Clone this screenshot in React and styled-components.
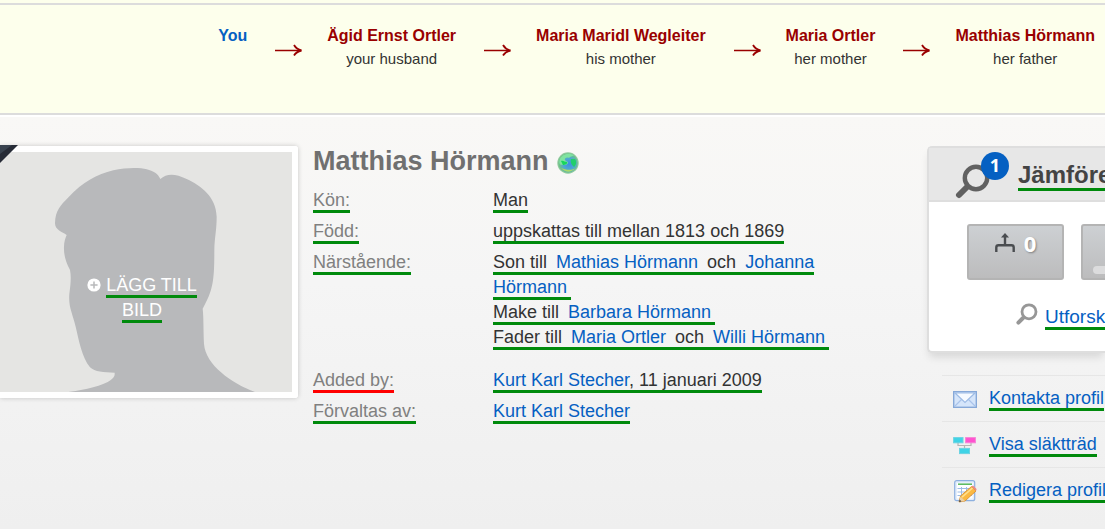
import React from "react";
import styled, { createGlobalStyle } from "styled-components";

const path = [
  { name: "You", me: true },
  { name: "Ägid Ernst Ortler", relation: "your husband" },
  { name: "Maria Maridl Wegleiter", relation: "his mother" },
  { name: "Maria Ortler", relation: "her mother" },
  { name: "Matthias Hörmann", relation: "her father" },
];

function Arrow() {
  return (
    <ArrowIcon viewBox="0 0 27 12" aria-hidden="true">
      <path d="M0 6.5H25" stroke="#990000" strokeWidth="1.5" fill="none" />
      <path
        d="M19 1C20.5 3.6 22.6 5.6 26.5 6.5C22.6 7.4 20.5 9 19 11.5"
        stroke="#990000"
        strokeWidth="1.8"
        fill="none"
      />
    </ArrowIcon>
  );
}

function RelationPath() {
  return (
    <PathBar>
      {path.map((person, i) => (
        <React.Fragment key={person.name}>
          {i > 0 && <Arrow />}
          <Person>
            <PersonLink href="#" $me={person.me}>
              {person.name}
            </PersonLink>
            {person.relation && <Relation>{person.relation}</Relation>}
          </Person>
        </React.Fragment>
      ))}
    </PathBar>
  );
}

function Photo() {
  return (
    <PhotoFrame>
      <Silhouette viewBox="0 66 876 720" aria-hidden="true">
        <path
          fill="#b8b9bb"
          d="M205 786C262 778 345 760 344 732L344 728C310 727 285 726 270 712C245 680 237 632 227 590C217 548 205 532 208 492C212 462 214 440 210 420C196 394 191 372 192 350C192 335 196 325 200 315C187 306 165 300 165 280C166 240 182 226 204 203C250 155 290 133 340 121C378 112 420 112 440 118C460 123 475 132 481 147C500 130 525 130 560 147C604 168 648 200 650 260C650 300 644 320 643 360C643 450 640 480 608 536C611 560 610 600 612 642C617 705 695 760 765 786Z"
        />
      </Silhouette>
      <Corner viewBox="0 0 18 18" aria-hidden="true">
        <path d="M0 0H18L0 18Z" fill="#262b36" />
        <path d="M0 0H12L0 9Z" fill="#39434f" />
      </Corner>
      <AddPhoto type="button">
        <PlusIcon viewBox="0 0 14 14" aria-hidden="true">
          <circle cx="7" cy="7" r="6.6" fill="#fff" />
          <path d="M7 3.4V10.6M3.4 7H10.6" stroke="#b8b9bb" strokeWidth="1.5" />
        </PlusIcon>
        <Marked>LÄGG TILL BILD</Marked>
      </AddPhoto>
    </PhotoFrame>
  );
}

function Globe() {
  return (
    <GlobeIcon viewBox="0 0 22 22" aria-hidden="true">
      <defs>
        <radialGradient id="sea" cx="55%" cy="55%" r="50%">
          <stop offset="0" stopColor="#3f8fe0" />
          <stop offset="0.6" stopColor="#4fa9cf" />
          <stop offset="1" stopColor="#6fc08a" />
        </radialGradient>
      </defs>
      <circle cx="11" cy="11" r="10.7" fill="#8fca9c" />
      <circle cx="11" cy="11" r="9.7" fill="url(#sea)" />
      <path d="M2.5 8C5 2 12 0 17 3.5C15 4.5 13 4 12 6C10 5 7 6 8 8C9 10 11 9 11 11C9 14 6 12 4 13C2 12 2 10 2.5 8Z" fill="#7fe3a0" />
      <path d="M4 9C6 8 8 10 10 10C11 12 8 13 6 13Z" fill="#17d65c" />
      <path d="M14 7L18 7C20 10 19 13 17 15C15 13 13 11 14 7Z" fill="#21cf6b" />
      <path d="M4 16C8 20.5 14 21 18 16.5C14 18.5 9 18 4 16Z" fill="#a9d96c" />
    </GlobeIcon>
  );
}

function Info() {
  return (
    <InfoColumn>
      <Title>
        Matthias Hörmann <Globe />
      </Title>
      <Facts>
        <Label>
          <Marked>Kön:</Marked>
        </Label>
        <Value>
          <Marked>Man</Marked>
        </Value>
        <Label>
          <Marked>Född:</Marked>
        </Label>
        <Value>
          <Marked>uppskattas till mellan 1813 och 1869</Marked>
        </Value>
        <Label>
          <Marked>Närstående:</Marked>
        </Label>
        <Relatives>
          <div>
            <Marked>
              Son till <Relative href="#">Mathias Hörmann</Relative> och{" "}
              <Relative href="#">Johanna Hörmann</Relative>
            </Marked>
          </div>
          <div>
            <Marked>
              Make till <Relative href="#">Barbara Hörmann</Relative>
            </Marked>
          </div>
          <div>
            <Marked>
              Fader till <Relative href="#">Maria Ortler</Relative> och{" "}
              <Relative href="#">Willi Hörmann</Relative>
            </Marked>
          </div>
        </Relatives>
        <Label>
          <Marked $color="#ff0000">Added by:</Marked>
        </Label>
        <Value>
          <Marked>
            <Link href="#">Kurt Karl Stecher</Link>, 11 januari 2009
          </Marked>
        </Value>
        <Label>
          <Marked>Förvaltas av:</Marked>
        </Label>
        <Value>
          <Marked>
            <Link href="#">Kurt Karl Stecher</Link>
          </Marked>
        </Value>
      </Facts>
    </InfoColumn>
  );
}

function Matches() {
  return (
    <Card>
      <CardHeader>
        <SearchBadge>
          <svg width="36" height="36" viewBox="0 0 36 36" aria-hidden="true">
            <path d="M12 24L4 32" stroke="#616161" strokeWidth="6" strokeLinecap="round" />
            <circle cx="21" cy="15" r="11.2" fill="none" stroke="#616161" strokeWidth="4.4" />
          </svg>
          <Badge>1</Badge>
        </SearchBadge>
        <CardTitle>
          <Marked>Jämföre</Marked>
        </CardTitle>
      </CardHeader>
      <Counters>
        <Counter type="button">
          <svg width="20" height="20" viewBox="0 0 20 20" aria-hidden="true">
            <path
              d="M1.3 19V14.5Q1.3 12.3 3.5 12.3H16.5Q18.7 12.3 18.7 14.5V19M10 12V3"
              fill="none"
              stroke="#4a4d50"
              strokeWidth="2.4"
            />
            <path d="M10 0L14 4.5H6Z" fill="#4a4d50" />
          </svg>
          0
        </Counter>
        <Counter type="button" aria-label="Matches">
          <Bar />
        </Counter>
      </Counters>
      <Explore>
        <svg width="22" height="22" viewBox="0 0 22 22" aria-hidden="true">
          <path d="M7 15L2.4 19.6" stroke="#979797" strokeWidth="4" strokeLinecap="round" />
          <circle cx="13" cy="8.8" r="7" fill="none" stroke="#979797" strokeWidth="2.8" />
        </svg>
        <Line>
          <Marked>
            <Link href="#">Utforsk</Link>
          </Marked>
        </Line>
      </Explore>
    </Card>
  );
}

function MailIcon() {
  return (
    <svg width="24" height="24" viewBox="0 0 24 24" aria-hidden="true">
      <rect x="0.7" y="4.7" width="22.6" height="15.6" fill="#d5e5fa" stroke="#86a8d8" strokeWidth="1.4" />
      <path d="M2 19L9 12M22 19L15 12" stroke="#a9c3ea" strokeWidth="1.2" />
      <path d="M2 6H22L12 15.5Z" fill="#f6faff" stroke="#9dbbe5" strokeWidth="1.2" />
    </svg>
  );
}

function TreeIcon() {
  return (
    <svg width="24" height="24" viewBox="0 0 24 24" aria-hidden="true">
      <path d="M5 9V12.5H18V9M11.5 12V16" fill="none" stroke="#b5b5b5" strokeWidth="1.2" />
      <rect x="0.6" y="4.6" width="9.4" height="5.2" fill="#3fd3e6" stroke="#6cd3e2" />
      <rect x="12.6" y="4.6" width="9.8" height="5.2" fill="#ff52cf" stroke="#f584d6" />
      <rect x="6.5" y="15.4" width="10" height="5.2" fill="#3fd3e6" stroke="#6cd3e2" />
    </svg>
  );
}

function EditIcon() {
  return (
    <svg width="24" height="24" viewBox="0 0 24 24" aria-hidden="true">
      <rect x="1.7" y="1.7" width="20" height="20" rx="2" fill="#e4eefb" stroke="#8db0df" strokeWidth="1.2" />
      <rect x="4" y="4" width="15.5" height="15.5" fill="#fff" />
      <path d="M5 5.2H19" stroke="#5dbb63" strokeWidth="1.6" />
      <path d="M4.5 9.5H19M4.5 13H19M4.5 16.5H19M8.5 8V19M13.5 8V19" stroke="#9dbce6" strokeWidth="1" />
      <path d="M6 23L7.5 17L18.5 7.5L23 12L12 22Z" fill="#fbb943" stroke="#d98a25" strokeWidth="0.8" />
      <path d="M9 18.2L19.5 9" stroke="#ffe08e" strokeWidth="1.6" />
      <path d="M18.5 7.5L20 6.5L23.6 10L23 12Z" fill="#ed8a83" />
      <path d="M6 23L7.5 17.5L12 22Z" fill="#ecd0a4" />
      <path d="M6 23L6.6 20.5L8.5 22.4Z" fill="#444" />
    </svg>
  );
}

const actions = [
  { text: "Kontakta profil", Icon: MailIcon },
  { text: "Visa släktträd", Icon: TreeIcon },
  { text: "Redigera profil", Icon: EditIcon },
];

function App() {
  return (
    <Page>
      <GlobalStyle />
      <TopStrip />
      <RelationPath />
      <Main>
        <Photo />
        <Info />
        <Sidebar>
          <Matches />
          <Actions>
            {actions.map(({ text, Icon }) => (
              <Action key={text}>
                <Icon />
                <Line>
                  <Marked>
                    <Link href="#">{text}</Link>
                  </Marked>
                </Line>
              </Action>
            ))}
          </Actions>
        </Sidebar>
      </Main>
    </Page>
  );
}

export default App;

const GlobalStyle = createGlobalStyle`
  body {
    margin: 0;
    overflow-x: hidden;
    font-family: "Liberation Sans", Arial, sans-serif;
    font-size: 18px;
    line-height: 25px;
    color: #333333;
  }
  svg {
    flex-shrink: 0;
  }
`;

const Page = styled.div`
  display: flex;
  flex-direction: column;
  min-height: 100vh;
  overflow: hidden;
`;

const TopStrip = styled.div`
  height: 3px;
  background-color: #fdffec;
`;

const PathBar = styled.nav`
  display: flex;
  justify-content: flex-end;
  padding: 19px 10px 43px;
  background-color: #fdffec;
  border-top: 2px solid #dcdcdc;
  border-bottom: 2px solid #dcdcdc;
  white-space: nowrap;
`;

const Person = styled.div`
  display: flex;
  flex-direction: column;
  align-items: center;
`;

const PersonLink = styled.a`
  font-size: 16px;
  font-weight: bold;
  line-height: 24px;
  text-decoration: none;
  color: ${(props) => (props.$me ? "#0560c2" : "#990000")};
`;

const Relation = styled.span`
  font-size: 15px;
  line-height: 22px;
`;

const ArrowIcon = styled.svg`
  width: 27px;
  height: 12px;
  margin: 20px 25px 0 28px;
`;

const Main = styled.main`
  display: grid;
  grid-template-columns: 298px minmax(0, 1fr) 178px;
  flex: 1;
  align-items: start;
  padding-top: 29px;
  border-top: 2px solid #ffffff;
  background: linear-gradient(#f9f8f6, #f5f5f5 40%, #efefef);
`;

const PhotoFrame = styled.div`
  position: relative;
  box-sizing: border-box;
  border: 6px solid #ffffff;
  border-left: none;
  border-radius: 0 3px 3px 0;
  background-color: #e5e5e3;
  box-shadow: 0 0 5px rgba(0, 0, 0, 0.2);
`;

const Silhouette = styled.svg`
  display: block;
  width: 100%;
`;

const Corner = styled.svg`
  position: absolute;
  top: -7px;
  left: 0;
  width: 18px;
  height: 18px;
`;

const AddPhoto = styled.button`
  position: absolute;
  inset: 121px 8px auto 0;
  padding: 0 70px;
  border: none;
  background: none;
  color: #ffffff;
  font: inherit;
  text-align: center;
  cursor: pointer;
`;

const PlusIcon = styled.svg`
  width: 14px;
  height: 14px;
  margin-right: 5px;
  vertical-align: -1px;
`;

const Marked = styled.span`
  border-bottom: 3px solid ${(props) => props.$color || "#008a0c"};
`;

const Line = styled.div`
  min-width: 0;
`;

const InfoColumn = styled.section`
  padding-left: 15px;
`;

const Title = styled.h1`
  display: flex;
  align-items: center;
  gap: 8px;
  margin: 0 0 11px;
  color: #707070;
  font-size: 27px;
  line-height: 31px;
`;

const GlobeIcon = styled.svg`
  width: 22px;
  height: 22px;
  margin-top: 3px;
`;

const Facts = styled.dl`
  display: grid;
  grid-template-columns: 180px minmax(0, 345px);
  row-gap: 6px;
  margin: 0;
`;

const Label = styled.dt`
  color: #808080;
`;

const Value = styled.dd`
  margin: 0;
`;

const Relatives = styled(Value)`
  padding-bottom: 12px;
`;

const Link = styled.a`
  color: #0560c2;
  text-decoration: none;
`;

const Relative = styled(Link)`
  padding: 0 4px;
`;

const Sidebar = styled.aside`
  min-width: 0;
  white-space: nowrap;
`;

const Card = styled.section`
  border: 2px solid #dedede;
  border-right: none;
  border-radius: 5px 0 0 5px;
  background-color: #ffffff;
  box-shadow: 0 6px 8px -2px rgba(0, 0, 0, 0.12);
`;

const CardHeader = styled.header`
  display: flex;
  align-items: center;
  gap: 9px;
  height: 52px;
  padding-left: 26px;
  border-bottom: 2px solid #dedede;
  background-color: #e7e7e7;
`;

const SearchBadge = styled.div`
  position: relative;
  flex-shrink: 0;
  width: 54px;
  height: 36px;
  padding-top: 14px;
`;

const Badge = styled.span`
  position: absolute;
  top: 3px;
  right: 0;
  width: 28px;
  height: 28px;
  border-radius: 50%;
  background-color: #0560c2;
  color: #ffffff;
  font-family: "Open Sans", sans-serif;
  font-size: 18px;
  font-weight: bold;
  line-height: 27px;
  text-align: center;
`;

const CardTitle = styled.h2`
  margin: 0;
  color: #444444;
  font-size: 24px;
`;

const Counters = styled.div`
  display: flex;
  gap: 17px;
  padding: 22px 0 0 38px;
`;

const Counter = styled.button`
  display: flex;
  flex: 0 0 97px;
  align-items: flex-start;
  justify-content: center;
  gap: 9px;
  box-sizing: border-box;
  height: 56px;
  padding: 7px 0 0;
  border: 2px solid #b4b4b4;
  border-radius: 3px;
  background: linear-gradient(#cdd0d3, #bcbcbd);
  color: #ffffff;
  font-family: "Open Sans", sans-serif;
  font-size: 22px;
  font-weight: bold;
  line-height: 21px;
  text-shadow: 1px 1px 2px rgba(0, 0, 0, 0.35);
  cursor: pointer;
`;

const Bar = styled.span`
  width: 74px;
  height: 8px;
  margin-top: 33px;
  border-radius: 4px;
  background-color: #dcdcdd;
`;

const Explore = styled.div`
  display: flex;
  align-items: center;
  gap: 7px;
  padding: 23px 0 22px 87px;
  font-size: 19px;

  svg {
    margin-bottom: 4px;
  }
`;

const Actions = styled.ul`
  margin: 22px 0 0 15px;
  padding: 0;
  list-style: none;
`;

const Action = styled.li`
  display: flex;
  align-items: center;
  gap: 12px;
  height: 45px;
  padding-left: 11px;
  border-top: 1px solid #e6e6e6;
`;
